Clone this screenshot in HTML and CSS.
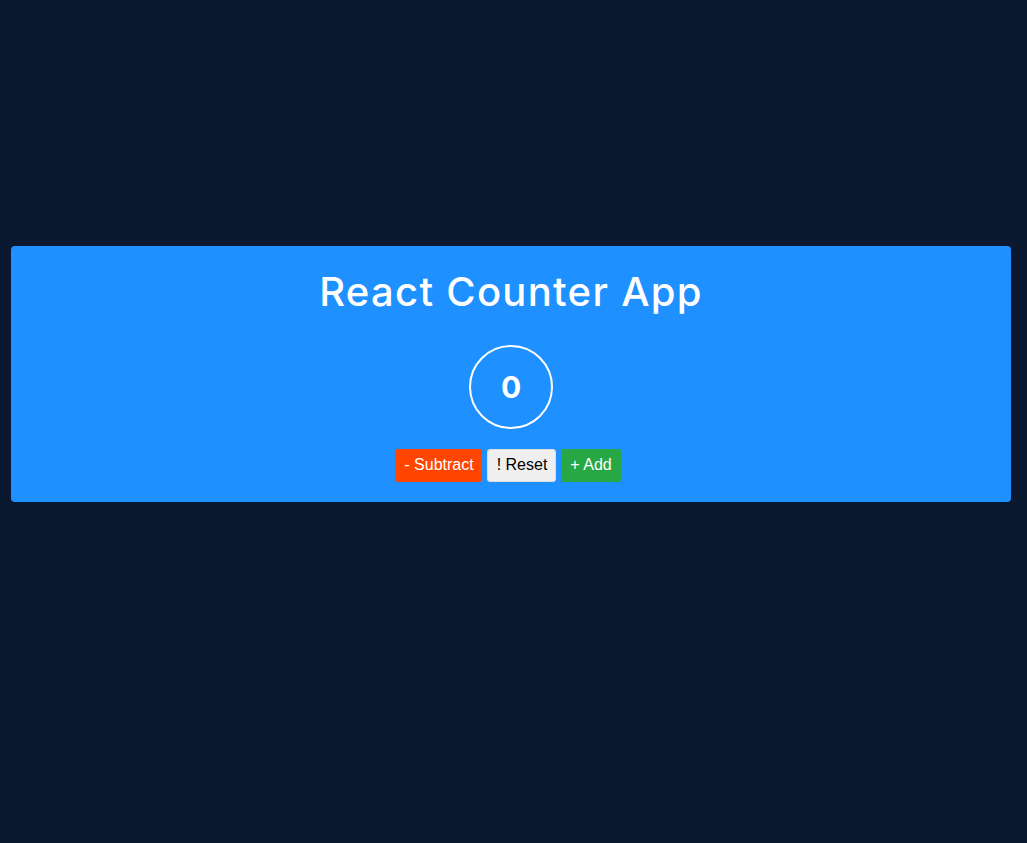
FILE: index.html
```html
<!DOCTYPE html>
<html>
<head>
<meta charset="utf-8">
<link rel="stylesheet" href="styles.css">
</head>
<body>
<div class="page">
  <div class="card">
    <h1 class="title">React Counter App</h1>
    <div class="count">0</div>
    <div class="buttons">
      <button class="btn btn-sub">- Subtract</button>
      <button class="btn btn-reset">! Reset</button>
      <button class="btn btn-add">+ Add</button>
    </div>
  </div>
</div>
</body>
</html>
```
FILE: styles.css
```css
html, body {
  margin: 0;
  padding: 0;
  background: #0b1930;
}
.page {
  padding: 246px 16px 0 11px;
  min-height: 100vh;
  box-sizing: border-box;
}
.card {
  background: #1e90ff;
  border-radius: 4px;
  padding: 22px 0 20px;
  display: flex;
  flex-direction: column;
  align-items: center;
  font-family: "Inter", "Noto Sans", sans-serif;
  color: #fff;
}
.title {
  margin: 0;
  font-size: 40px;
  font-weight: 500;
  line-height: 48px;
  letter-spacing: 1.3px;
}
.count {
  margin-top: 29px;
  width: 80px;
  height: 80px;
  border: 2px solid #fff;
  border-radius: 50%;
  display: flex;
  align-items: center;
  justify-content: center;
  font-size: 30px;
  font-weight: 700;
}
.buttons {
  margin-top: 20px;
  display: flex;
  gap: 5px;
  margin-right: 6px;
}
.btn {
  font-family: "Liberation Sans", Arial, sans-serif;
  font-size: 16px;
  line-height: 18px;
  padding: 6px 8px 7px;
  border: 1px solid transparent;
  border-radius: 3px;
  color: #fff;
}
.btn-sub { background: #ff4500; padding-right: 7px; }
.btn-reset { background: #efefef; color: #000; border-color: #ddd; padding-left: 9px; }
.btn-add { background: #28a745; padding-right: 8px; }
```
